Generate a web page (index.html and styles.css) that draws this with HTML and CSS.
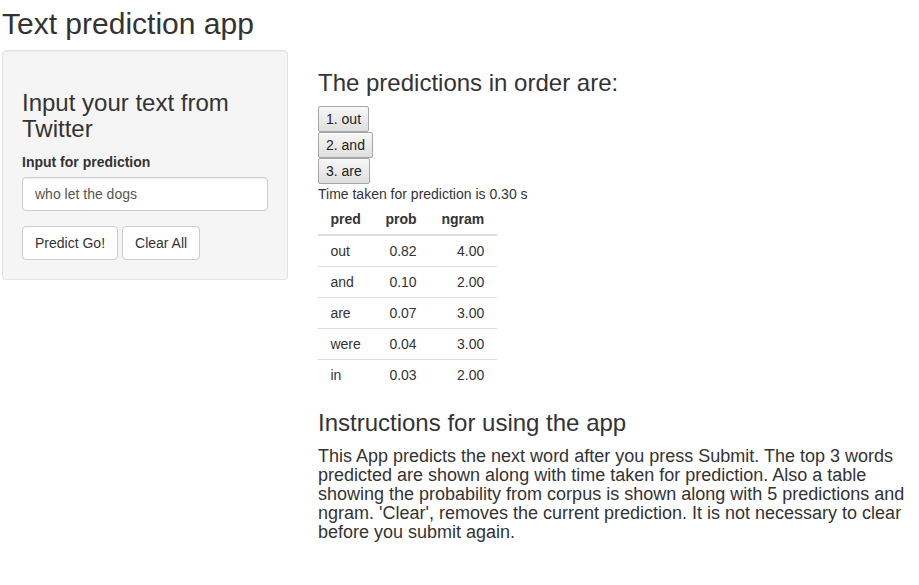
FILE: index.html
```html
<!DOCTYPE html>
<html>
<head>
<meta charset="utf-8">
<title>Text prediction app</title>
<link rel="stylesheet" href="styles.css">
</head>
<body>
<div class="page">
  <h2 class="title">Text prediction app</h2>
  <div class="layout">
    <div class="sidebar">
      <div class="well">
        <h3 class="heading heading-well">Input your text from Twitter</h3>
        <div class="form-group">
          <label class="label" for="txt">Input for prediction</label>
          <input id="txt" class="text-input" type="text" value="who let the dogs">
        </div>
        <div class="actions">
          <button class="btn">Predict Go!</button>
          <button class="btn">Clear All</button>
        </div>
      </div>
    </div>
    <div class="main">
      <h3 class="heading">The predictions in order are:</h3>
      <div class="preds">
        <button class="pred-btn">1. out</button>
        <button class="pred-btn">2. and</button>
        <button class="pred-btn">3. are</button>
      </div>
      <div class="timing">Time taken for prediction is 0.30 s</div>
      <table class="table">
        <thead>
          <tr><th>pred</th><th class="c-num">prob</th><th class="c-num">ngram</th></tr>
        </thead>
        <tbody>
          <tr><td>out</td><td class="c-num">0.82</td><td class="c-num">4.00</td></tr>
          <tr><td>and</td><td class="c-num">0.10</td><td class="c-num">2.00</td></tr>
          <tr><td>are</td><td class="c-num">0.07</td><td class="c-num">3.00</td></tr>
          <tr><td>were</td><td class="c-num">0.04</td><td class="c-num">3.00</td></tr>
          <tr><td>in</td><td class="c-num">0.03</td><td class="c-num">2.00</td></tr>
        </tbody>
      </table>
      <h3 class="heading">Instructions for using the app</h3>
      <p class="instructions">This App predicts the next word after you press Submit. The top 3 words predicted are shown along with time taken for prediction. Also a table showing the probability from corpus is shown along with 5 predictions and ngram. 'Clear', removes the current prediction. It is not necessary to clear before you submit again.</p>
    </div>
  </div>
</div>
</body>
</html>
```
FILE: styles.css
```css
* { box-sizing: border-box; }
html, body {
  margin: 0;
  padding: 0;
  background: #fff;
}
body {
  font-family: "Liberation Sans", Arial, Helvetica, sans-serif;
  font-size: 14px;
  line-height: 20px;
  color: #333;
}
.page {
  padding: 0 0 0 2px;
}
.title {
  margin: 7px 0 10px 0;
  font-size: 30px;
  font-weight: 500;
  line-height: 33px;
}
.layout {
  display: flex;
  gap: 30px;
  align-items: flex-start;
}
.sidebar {
  width: 286px;
  flex: none;
}
.main {
  flex: 1;
  min-width: 0;
}
.well {
  background: #f5f5f5;
  border: 1px solid #e3e3e3;
  border-radius: 4px;
  padding: 19px;
  box-shadow: inset 0 1px 1px rgba(0,0,0,.05);
}
.heading {
  margin: 20px 0 10px 0;
  font-size: 24px;
  font-weight: 500;
  line-height: 26.4px;
}
.heading-well {
  line-height: 26px;
}
.form-group {
  margin-bottom: 15px;
}
.label {
  display: block;
  font-weight: 700;
  margin-bottom: 5px;
}
.text-input {
  display: block;
  width: 100%;
  height: 34px;
  padding: 6px 12px;
  font: inherit;
  font-size: 14px;
  line-height: 20px;
  color: #555;
  background: #fff;
  border: 1px solid #ccc;
  border-radius: 4px;
  box-shadow: inset 0 1px 1px rgba(0,0,0,.075);
}
.actions {
  display: flex;
  gap: 4px;
}
.btn {
  font: inherit;
  font-size: 14px;
  line-height: 20px;
  color: #333;
  background: #fff;
  border: 1px solid #ccc;
  border-radius: 4px;
  padding: 6px 12px;
  height: 34px;
}
.preds {
  display: flex;
  flex-direction: column;
  align-items: flex-start;
}
.pred-btn {
  font: inherit;
  font-size: 14px;
  line-height: 20px;
  color: #222;
  height: 26px;
  padding: 2px 7px;
  border: 1px solid #a6a6a6;
  border-radius: 2px;
  background: linear-gradient(#f7f7f7, #dedede);
}
.timing {
  line-height: 20px;
}
.table {
  border-collapse: collapse;
  border-spacing: 0;
  margin-bottom: 20px;
}
.table th, .table td {
  padding: 5px 12.4px;
  line-height: 20px;
  text-align: left;
  vertical-align: top;
}
.table th {
  font-weight: 700;
  border-bottom: 2px solid #ddd;
}
.table td {
  border-top: 1px solid #ddd;
}
.table tbody tr:first-child td {
  border-top: none;
}
.table .c-num {
  text-align: right;
}
.instructions {
  margin: 0;
  font-size: 18px;
  line-height: 19px;
}
```
